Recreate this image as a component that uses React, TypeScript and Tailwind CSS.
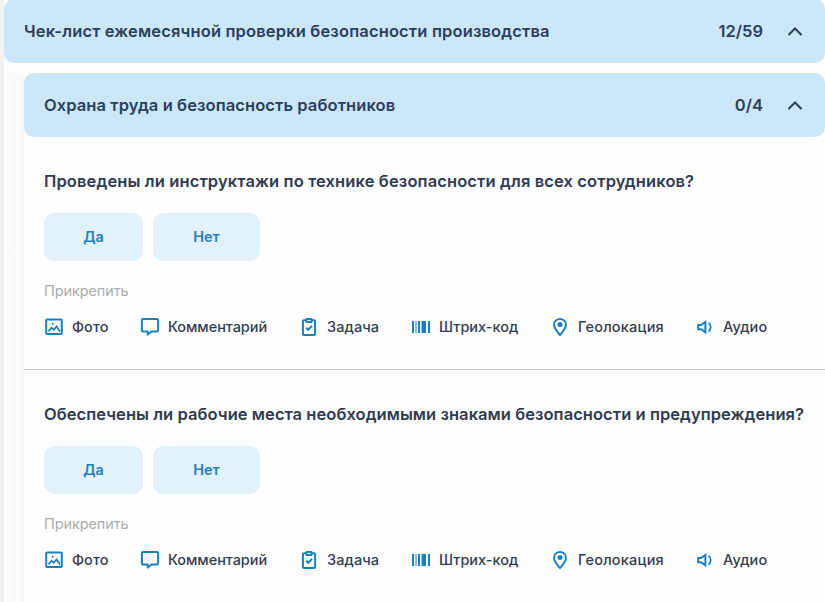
import React from 'react';
import { clsx } from 'clsx';

const ATTACHMENTS = [
  { label: 'Фото', icon: PhotoIcon, width: 'w-[36px]', tracking: 'tracking-[0.05px]' },
  { label: 'Комментарий', icon: CommentIcon, width: 'w-[99px]', tracking: 'tracking-[-0.05px]' },
  { label: 'Задача', icon: TaskIcon, width: 'w-[52px]', tracking: 'tracking-[0.1px]' },
  { label: 'Штрих-код', icon: BarcodeIcon, width: 'w-[79px]', tracking: 'tracking-[0px]' },
  { label: 'Геолокация', icon: PinIcon, width: 'w-[85px]', tracking: 'tracking-[0.2px]' },
  { label: 'Аудио', icon: AudioIcon, width: 'w-[44px]', tracking: 'tracking-[0.1px]' },
];

function Svg({ children }: { children: React.ReactNode }) {
  return (
    <svg className="w-5 h-5 shrink-0 text-[#1b80bd]" viewBox="0 0 20 20" fill="none" stroke="currentColor" strokeWidth="2">
      {children}
    </svg>
  );
}

function PhotoIcon() {
  return (
    <Svg>
      <rect x="2.2" y="2.6" width="15.6" height="14.4" rx="0.8" />
      <path d="M4.5 14.4 7.6 10.8l2.2 2 2.8-3.4 3.4 5" strokeWidth="1.7" />
      <circle cx="8.8" cy="6.8" r="1" fill="currentColor" stroke="none" />
    </Svg>
  );
}

function CommentIcon() {
  return (
    <Svg>
      <path d="M2.9 2h14.2a1 1 0 0 1 1 1v10.4a1 1 0 0 1-1 1H11.6L7.7 17.6v-3.2H2.9a1 1 0 0 1-1-1V3a1 1 0 0 1 1-1Z" strokeLinejoin="round" />
    </Svg>
  );
}

function TaskIcon() {
  return (
    <Svg>
      <rect x="3.9" y="3.2" width="12.2" height="14.7" rx="1" />
      <rect x="6.5" y="1" width="7" height="5" rx="1" fill="currentColor" stroke="none" />
      <path d="M8.3 3.5h3.4" stroke="white" strokeWidth="1" />
      <path d="m7.2 10.8 2 2 3.9-3.9" />
    </Svg>
  );
}

function BarcodeIcon() {
  return (
    <Svg>
      <path d="M1 4h2v12H1zM4.5 4h1v12h-1zM7 4h2v12H7zM10.5 4H15v12h-4.5zM17 4h2v12h-2z" fill="currentColor" stroke="none" />
    </Svg>
  );
}

function PinIcon() {
  return (
    <Svg>
      <path d="M10 18c-3.5-4.2-6-6.8-6-10.1a6 6 0 0 1 12 0c0 3.3-2.5 5.9-6 10.1Z" />
      <circle cx="10" cy="7.6" r="2.5" fill="currentColor" stroke="none" />
    </Svg>
  );
}

function AudioIcon() {
  return (
    <Svg>
      <path d="M3.2 8H6l4.4-3.1v10.4L6 12.200H3.200Z" />
      <path d="M13.600 5.600c2.800 2.200 2.800 6.800 0 9" strokeWidth="1.800" />
    </Svg>
  );
}

function SectionHeader({ title, count, tracking }: { title: string; count: string; tracking: string }) {
  return (
    <div className="h-16 rounded-[10px] bg-[#cbe7f8] flex items-center pl-5 pr-[22px] text-[16.5px] leading-6 text-[#2b405b] font-semibold whitespace-nowrap">
      <span className={clsx('flex-1', tracking)}>{title}</span>
      <span className="mr-6">{count}</span>
      <svg className="w-4 h-4" viewBox="0 0 16 16" fill="none" stroke="currentColor" strokeWidth="2" strokeLinecap="round">
        <path d="m2 11.500 6-6 6 6" />
      </svg>
    </div>
  );
}

function Question({ title, tracking }: { title: string; tracking: string }) {
  return (
    <section className="h-[233px] border-b border-[#cbcbcf] px-5 pt-8">
      <h3 className={clsx('h-6 leading-6 text-[16.5px] font-semibold text-[#303a50] whitespace-nowrap', tracking)}>{title}</h3>
      <div className="mt-5 flex gap-[10px] text-[14.5px] font-semibold text-[#2480bd]">
        <button className="w-[99px] h-12 rounded-[10px] bg-[#e3f1fb]">Да</button>
        <button className="w-[107px] h-12 rounded-[10px] bg-[#e3f1fb]">Нет</button>
      </div>
      <div className="mt-5 h-5 leading-5 text-[14.5px] tracking-[-0.1px] text-[#aaacaf]">Прикрепить</div>
      <div className="mt-4 flex gap-8">
        {ATTACHMENTS.map(({ label, icon: Icon, width, tracking }) => (
          <div key={label} className="flex items-center gap-2 h-5">
            <Icon />
            <span className={clsx('shrink-0 whitespace-nowrap text-[14.5px] leading-5 font-medium text-[#343c51]', width, tracking)}>
              {label}
            </span>
          </div>
        ))}
      </div>
    </section>
  );
}

export default function App() {
  return (
    <div className="w-[825px] h-[602px] overflow-hidden bg-[#f0f1f1] pl-1 font-['Inter','Open_Sans',sans-serif]">
      <div className="h-full bg-[#fdfefd]">
        <div className="-mt-px inline-block w-full align-top">
          <SectionHeader title="Чек-лист ежемесячной проверки безопасности производства" count="12/59" tracking="tracking-[0.15px]" />
        </div>
        <div className="mt-[10px] flex">
          <div className="w-5 h-[529px] bg-linear-to-r from-[#fdfefd] to-[#f6f8f7]" />
          <div className="flex-1 min-w-0 bg-[#fefefe]">
            <SectionHeader title="Охрана труда и безопасность работников" count="0/4" tracking="tracking-[0.09px]" />
            <Question title="Проведены ли инструктажи по технике безопасности для всех сотрудников?" tracking="tracking-[0.12px]" />
            <Question title="Обеспечены ли рабочие места необходимыми знаками безопасности и предупреждения?" tracking="tracking-[0.055px]" />
          </div>
        </div>
      </div>
    </div>
  );
}
